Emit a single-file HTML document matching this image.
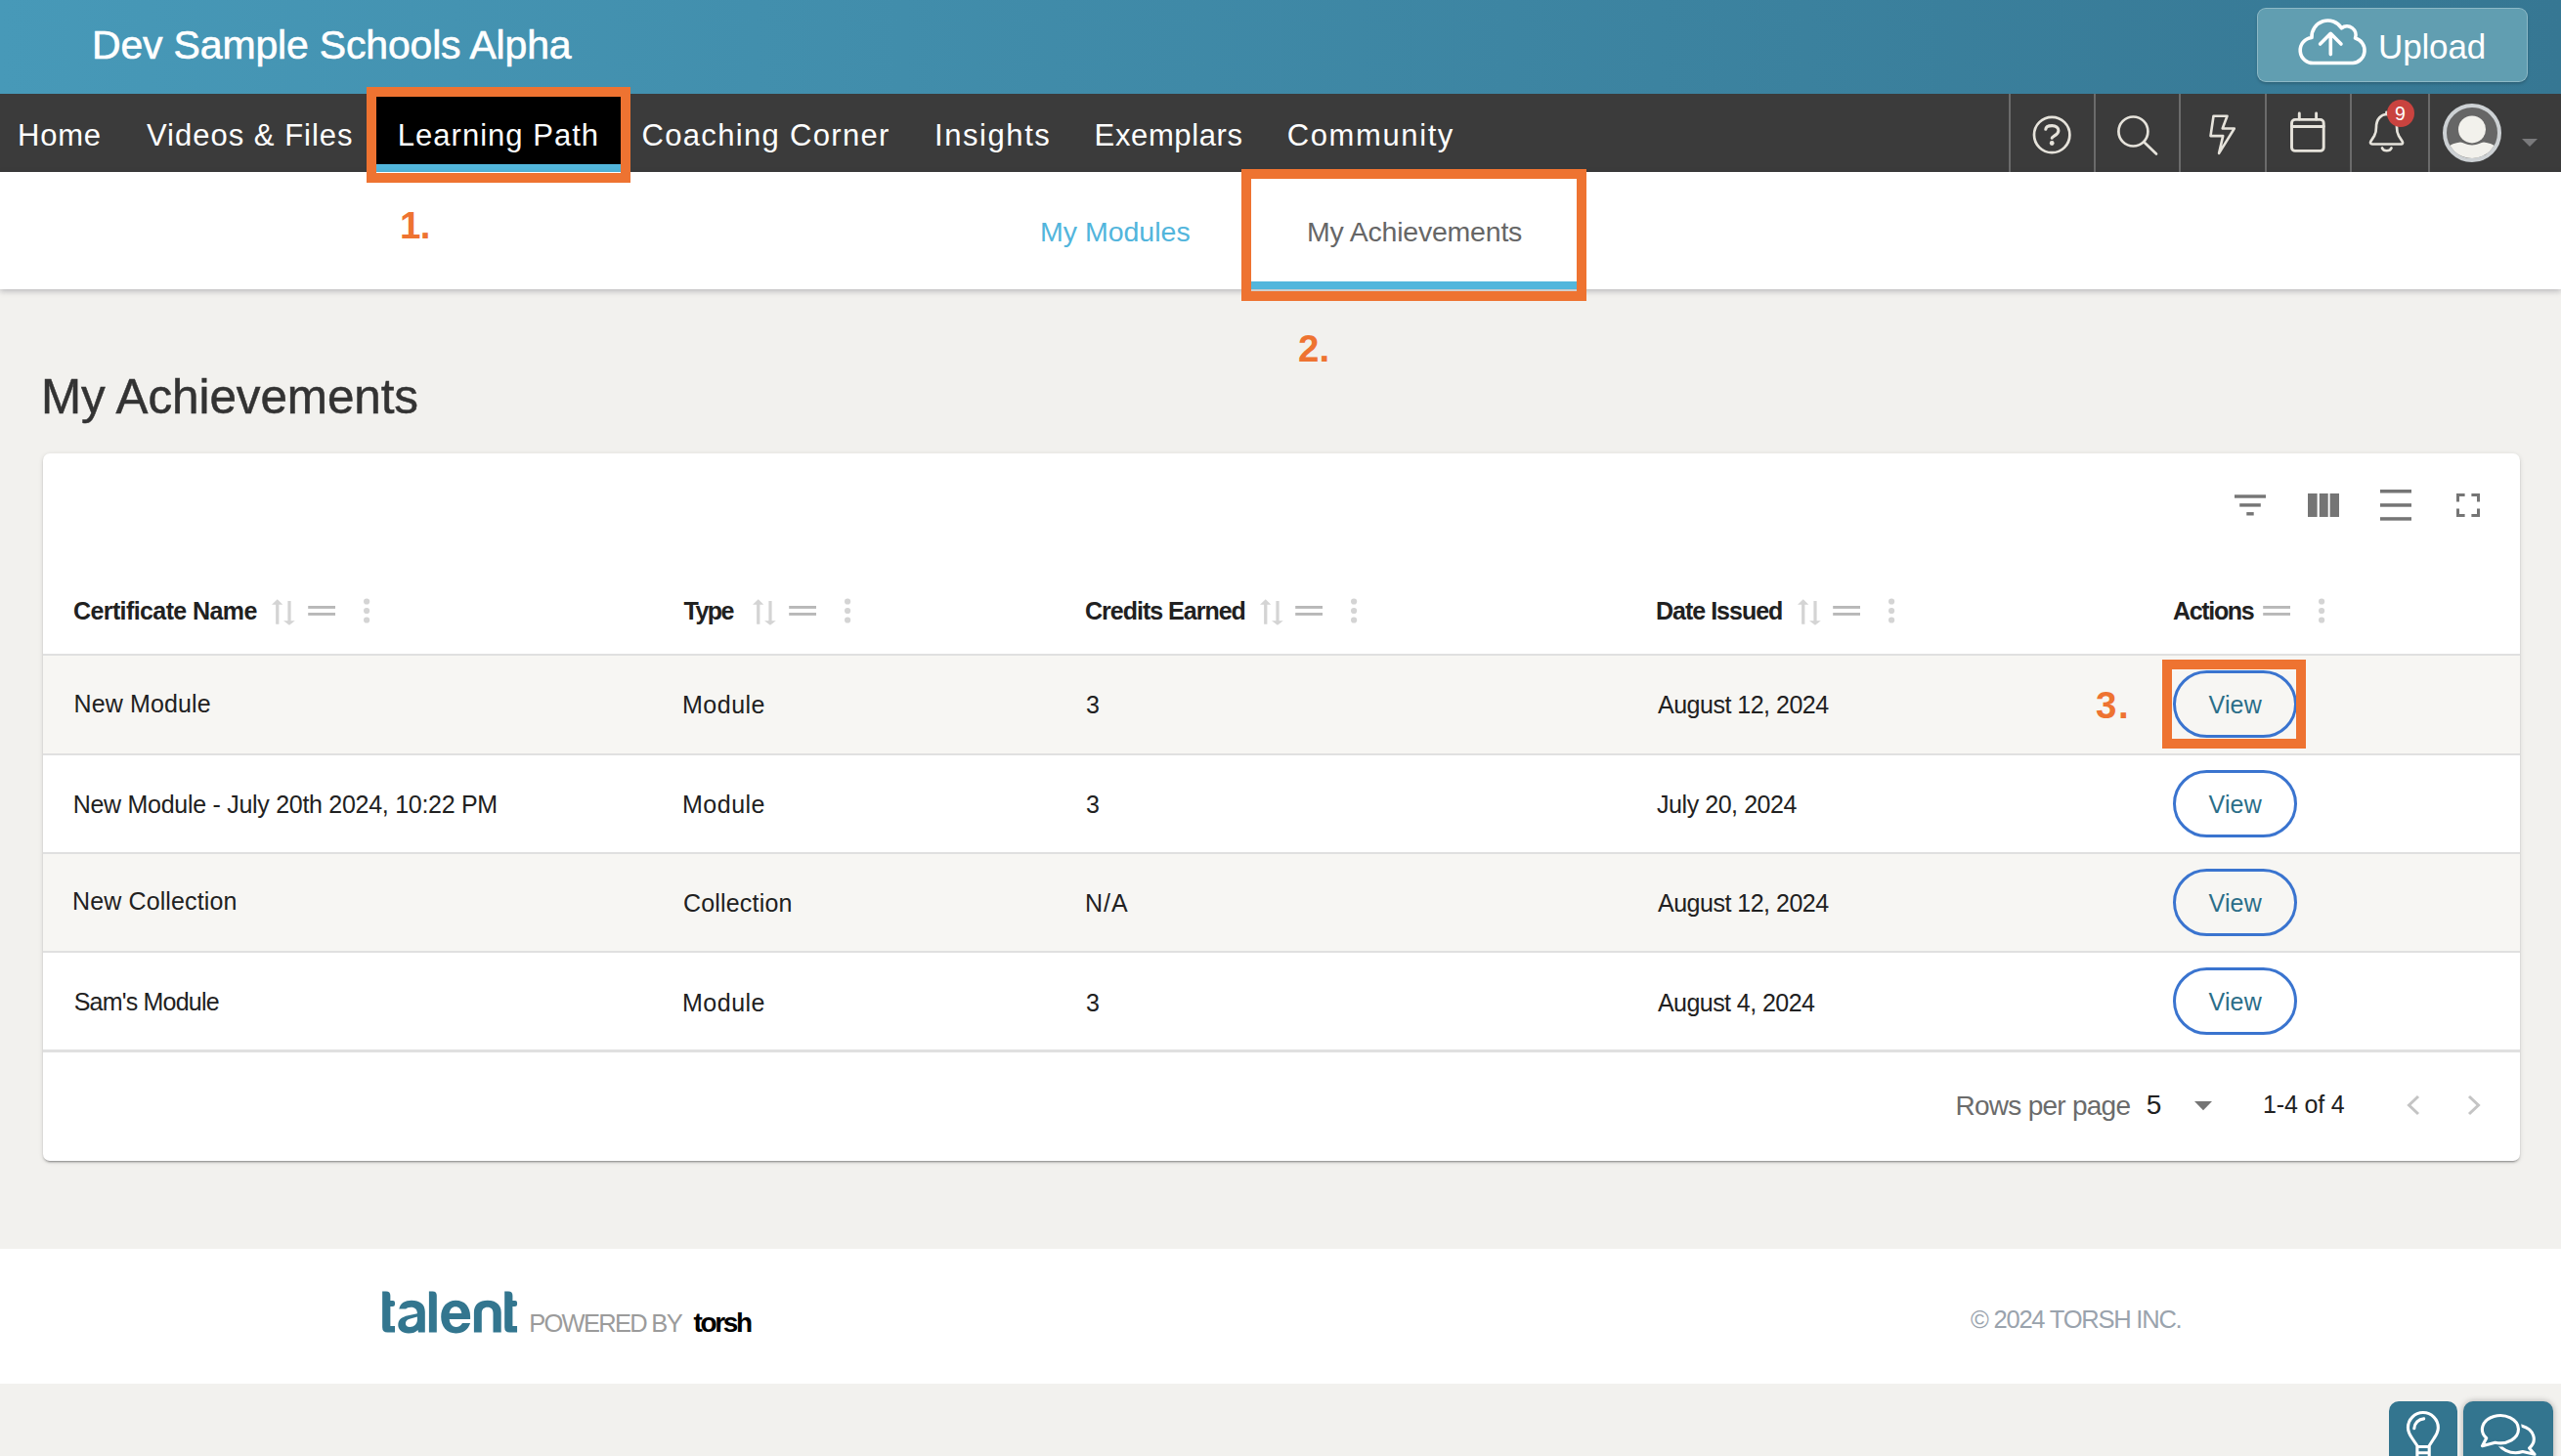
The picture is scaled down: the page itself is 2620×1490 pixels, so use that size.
<!DOCTYPE html>
<html><head><meta charset="utf-8">
<style>
*{margin:0;padding:0;box-sizing:border-box}
html,body{width:2620px;height:1490px;overflow:hidden;background:#f2f1ee;font-family:"Liberation Sans",sans-serif;position:relative}
.a{position:absolute}
.t{position:absolute;white-space:nowrap;line-height:1}
.div{position:absolute;top:96px;width:2px;height:80px;background:#6b6b6b}
.ob{position:absolute;border:10px solid #ee7331}
.rb{position:absolute;left:44px;width:2534px;height:2px;background:#e0e0e0}
.vb{position:absolute;left:2223px;width:127px;height:69px;border:3.8px solid #3a74cf;border-radius:35px}
</style></head><body>
<div class="a" style="left:0;top:0;width:2620px;height:96px;background:linear-gradient(to right,#4799b8,#367793)"></div>
<div class="t" style="left:94.0px;top:26.29px;font-size:41px;letter-spacing:-0.174px;color:#fff;-webkit-text-stroke:0.6px #fff">Dev Sample Schools Alpha</div>
<div class="a" style="left:2309px;top:8px;width:277px;height:76px;border-radius:9px;background:#619eb1;border:1.5px solid rgba(255,255,255,.28);box-shadow:0 2px 3px rgba(0,0,0,.18)"></div>
<svg class="a" style="left:2340px;top:10px" width="100" height="70" viewBox="2340 10 100 70">
 <g fill="none" stroke="#fff" stroke-width="3.6" stroke-linecap="round" stroke-linejoin="round">
  <path d="M2367.5 64.5 H2407 A13 13 0 0 0 2409.5 39 A9 9 0 0 0 2395.5 28.8 A16.5 16.5 0 0 0 2365 38.5 A13 13 0 0 0 2367.5 64.5 Z"/>
  <path d="M2384.3 55.6 V34.5 M2373.6 45 L2384.3 34.3 L2395 45"/>
 </g>
</svg>
<div class="t" style="left:2433.0px;top:30.07px;font-size:35px;letter-spacing:-0.14px;color:#fff">Upload</div>
<div class="a" style="left:0;top:96px;width:2620px;height:80px;background:#3b3b3b"></div>
<div class="a" style="left:380px;top:96px;width:260px;height:80px;background:#000"></div>
<div class="a" style="left:380px;top:168px;width:260px;height:8px;background:#52b6dc"></div>
<div class="t" style="left:18.0px;top:122.96px;font-size:31px;letter-spacing:0.8px;color:#fff">Home</div>
<div class="t" style="left:150.0px;top:122.96px;font-size:31px;letter-spacing:1.0px;color:#fff">Videos &amp; Files</div>
<div class="t" style="left:406.8px;top:122.96px;font-size:31px;letter-spacing:1.017px;color:#fff">Learning Path</div>
<div class="t" style="left:656.5px;top:122.96px;font-size:31px;letter-spacing:1.321px;color:#fff">Coaching Corner</div>
<div class="t" style="left:956.0px;top:122.96px;font-size:31px;letter-spacing:1.571px;color:#fff">Insights</div>
<div class="t" style="left:1119.6px;top:122.96px;font-size:31px;letter-spacing:0.625px;color:#fff">Exemplars</div>
<div class="t" style="left:1316.8px;top:122.96px;font-size:31px;letter-spacing:1.6px;color:#fff">Community</div>
<div class="div" style="left:2055px"></div>
<div class="div" style="left:2142px"></div>
<div class="div" style="left:2229px"></div>
<div class="div" style="left:2317px"></div>
<div class="div" style="left:2404px"></div>
<div class="div" style="left:2484px"></div>
<svg class="a" style="left:2056px;top:96px" width="564" height="80" viewBox="2056 96 564 80">
 <g fill="none" stroke="#e6e3db" stroke-width="2.7" stroke-linecap="round" stroke-linejoin="round">
  <circle cx="2099.2" cy="138" r="18.2"/>
  <path d="M2092.8 132.3 C2093 129.7 2095.8 128.6 2099.3 128.6 C2103.2 128.6 2105.9 130.6 2105.9 133.8 C2105.9 136.8 2103.5 138 2101.2 139.3 C2099.7 140.2 2099.2 140.8 2099.2 141.3" stroke-width="3.1"/>
  <circle cx="2099.2" cy="146.5" r="2.4" fill="#e6e3db" stroke="none"/>
  <circle cx="2182.4" cy="134.5" r="15"/>
  <path d="M2193.5 145.5 L2206 157.5"/>
  <path d="M2264.5 118.8 L2278.5 118.8 L2273.7 131.5 L2285.8 131.5 L2270.1 156.9 L2274.2 139.1 L2261.5 139.1 Z" stroke-width="2.6"/>
  <rect x="2344.5" y="122.4" width="32.7" height="32" rx="3.5" stroke-width="2.9"/>
  <path d="M2344.5 129.5 H2377.2 M2352.3 116 V122 M2369.6 116 V122" stroke-width="2.9"/>
  <path d="M2427 147.5 H2457 C2458 147.5 2458.5 146 2457.5 144.5 L2454 139 C2452.5 136.5 2452 134 2452 130 C2452 122 2447 117 2441.5 117 C2436 117 2431 122 2431 130 C2431 134 2430.5 136.5 2429 139 L2425.5 144.5 C2424.5 146 2425 147.5 2427 147.5 Z" stroke-width="2.7"/>
  <path d="M2437 151.5 A5 4 0 0 0 2446.5 151.5" stroke-width="2.7"/>
  <path d="M2441.5 114.8 V117" stroke-width="2.7"/>
 </g>
 <circle cx="2456" cy="116" r="14" fill="#c9433f"/>
 <text x="2455.5" y="123" fill="#fff" font-size="19.5" font-family="Liberation Sans" text-anchor="middle">9</text>
 <circle cx="2529" cy="136" r="28" fill="#666" stroke="#cdd1d4" stroke-width="4"/>
 <clipPath id="avc"><circle cx="2529" cy="136" r="26"/></clipPath>
 <g clip-path="url(#avc)" fill="#f2f1ec">
  <circle cx="2529" cy="132.4" r="14"/>
  <path d="M2529 148.5 C2535 148.5 2538 145.5 2541 145.5 C2552 147 2560 152 2565 170 H2493 C2498 152 2506 147 2517 145.5 C2520 145.5 2523 148.5 2529 148.5 Z"/>
 </g>
 <path d="M2580 142 H2596 L2588 150 Z" fill="#7a7a7c"/>
</svg>
<div class="a" style="left:0;top:176px;width:2620px;height:120px;background:#fff;box-shadow:0 2px 6px rgba(20,20,40,.26)"></div>
<div class="t" style="left:1064.0px;top:222.87px;font-size:28.5px;letter-spacing:0.0px;color:#52b5dc">My Modules</div>
<div class="t" style="left:1337.0px;top:222.87px;font-size:28.5px;letter-spacing:-0.214px;color:#666">My Achievements</div>
<div class="a" style="left:1280px;top:288px;width:333px;height:8px;background:#52b6dc"></div>
<div class="ob" style="left:375px;top:89px;width:270px;height:98px"></div>
<div class="ob" style="left:1270px;top:173px;width:353px;height:135px"></div>
<div class="t" style="left:409.0px;top:212.31px;font-size:38.5px;font-weight:700;letter-spacing:-0.6px;color:#ee7331">1.</div>
<div class="t" style="left:1328.0px;top:337.91px;font-size:38.5px;font-weight:700;letter-spacing:0.0px;color:#ee7331">2.</div>
<div class="t" style="left:42.0px;top:381.18px;font-size:49.4px;letter-spacing:-0.071px;color:#333;-webkit-text-stroke:0.5px #333">My Achievements</div>
<div class="a" style="left:44px;top:464px;width:2534px;height:724px;background:#fff;border-radius:7px;box-shadow:0 3px 1px -2px rgba(0,0,0,.2),0 2px 2px 0 rgba(0,0,0,.14),0 1px 5px 0 rgba(0,0,0,.12)"></div>
<svg class="a" style="left:2280px;top:495px" width="270" height="45" viewBox="2280 495 270 45">
 <g fill="#757575">
  <rect x="2286" y="506.3" width="32" height="3.4"/>
  <rect x="2291.2" y="515.2" width="21.6" height="3.4"/>
  <rect x="2298.3" y="524.1" width="7.4" height="3.4"/>
  <rect x="2361" y="505" width="9.6" height="24"/>
  <rect x="2372.8" y="505" width="8.9" height="24"/>
  <rect x="2383.6" y="505" width="9.4" height="24"/>
  <rect x="2435" y="501" width="32" height="3.5"/>
  <rect x="2435" y="515.2" width="32" height="3.5"/>
  <rect x="2435" y="529.2" width="32" height="3.5"/>
  <path d="M2513 505 h8.6 v3 h-5.6 v5.6 h-3 Z M2537 505 v8.6 h-3 v-5.6 h-5.6 v-3 Z M2513 529 v-8.6 h3 v5.6 h5.6 v3 Z M2537 529 h-8.6 v-3 h5.6 v-5.6 h3 Z"/>
 </g>
</svg>
<div class="t" style="left:75.0px;top:612.84px;font-size:25px;font-weight:700;letter-spacing:-0.6px;color:#212121">Certificate Name</div>
<div class="t" style="left:699.6px;top:612.84px;font-size:25px;font-weight:700;letter-spacing:-1.533px;color:#212121">Type</div>
<div class="t" style="left:1110.0px;top:612.84px;font-size:25px;font-weight:700;letter-spacing:-1.0px;color:#212121">Credits Earned</div>
<div class="t" style="left:1694.0px;top:612.84px;font-size:25px;font-weight:700;letter-spacing:-1.0px;color:#212121">Date Issued</div>
<div class="t" style="left:2223.0px;top:612.84px;font-size:25px;font-weight:700;letter-spacing:-1.333px;color:#212121">Actions</div>
<svg class="a" style="left:0;top:600px" width="2620" height="50" viewBox="0 600 2620 50">
 <defs>
  <g id="srt" fill="#d4d4d4">
   <path d="M278 618.8 L283.75 613.3 L289.3 618.8 H285.4 V638.7 H282.1 V618.8 Z"/>
   <path d="M294.4 615 H297.6 V635.2 H301.8 L296 639.8 L290 635.2 H294.4 Z"/>
  </g>
  <g id="drg" fill="#b8b8b8">
   <rect x="315.2" y="620" width="27.8" height="2.9"/>
   <rect x="315.2" y="627" width="27.8" height="2.9"/>
  </g>
  <g id="dts" fill="#d4d4d4">
   <circle cx="375.1" cy="615.5" r="3.1"/>
   <circle cx="375.1" cy="625" r="3.1"/>
   <circle cx="375.1" cy="634.5" r="3.1"/>
  </g>
 </defs>
 <use href="#srt"/><use href="#drg"/><use href="#dts"/>
 <use href="#srt" x="492"/><use href="#drg" x="492"/><use href="#dts" x="492"/>
 <use href="#srt" x="1011"/><use href="#drg" x="1010"/><use href="#dts" x="1010"/>
 <use href="#srt" x="1561"/><use href="#drg" x="1560"/><use href="#dts" x="1560"/>
 <use href="#drg" x="2000"/><use href="#dts" x="2000"/>
</svg>
<div class="rb" style="top:669px"></div>
<div class="a" style="left:44px;top:671px;width:2534px;height:100px;background:#f7f6f3"></div>
<div class="rb" style="top:771px"></div>
<div class="rb" style="top:872px"></div>
<div class="a" style="left:44px;top:874px;width:2534px;height:99px;background:#f7f6f3"></div>
<div class="rb" style="top:973px"></div>
<div class="rb" style="top:1074px;height:3px"></div>
<div class="t" style="left:75.6px;top:707.84px;font-size:25px;letter-spacing:0.111px;color:#212121">New Module</div>
<div class="t" style="left:698.0px;top:709.34px;font-size:25px;letter-spacing:0.5px;color:#212121">Module</div>
<div class="t" style="left:1111.0px;top:709.34px;font-size:25px;letter-spacing:0.0px;color:#212121">3</div>
<div class="t" style="left:1696.0px;top:709.34px;font-size:25px;letter-spacing:-0.5px;color:#212121">August 12, 2024</div>
<div class="t" style="left:74.7px;top:810.84px;font-size:25px;letter-spacing:-0.283px;color:#212121">New Module - July 20th 2024, 10:22 PM</div>
<div class="t" style="left:698.0px;top:811.04px;font-size:25px;letter-spacing:0.5px;color:#212121">Module</div>
<div class="t" style="left:1111.0px;top:811.04px;font-size:25px;letter-spacing:0.0px;color:#212121">3</div>
<div class="t" style="left:1695.0px;top:811.04px;font-size:25px;letter-spacing:-0.442px;color:#212121">July 20, 2024</div>
<div class="t" style="left:74.0px;top:910.44px;font-size:25px;letter-spacing:0.123px;color:#212121">New Collection</div>
<div class="t" style="left:699.0px;top:912.04px;font-size:25px;letter-spacing:0.178px;color:#212121">Collection</div>
<div class="t" style="left:1110.0px;top:912.04px;font-size:25px;letter-spacing:1.0px;color:#212121">N/A</div>
<div class="t" style="left:1696.0px;top:912.04px;font-size:25px;letter-spacing:-0.5px;color:#212121">August 12, 2024</div>
<div class="t" style="left:75.7px;top:1013.04px;font-size:25px;letter-spacing:-0.791px;color:#212121">Sam's Module</div>
<div class="t" style="left:698.0px;top:1013.54px;font-size:25px;letter-spacing:0.5px;color:#212121">Module</div>
<div class="t" style="left:1111.0px;top:1013.54px;font-size:25px;letter-spacing:0.0px;color:#212121">3</div>
<div class="t" style="left:1696.0px;top:1013.54px;font-size:25px;letter-spacing:-0.562px;color:#212121">August 4, 2024</div>
<div class="vb" style="top:686px"></div>
<div class="vb" style="top:788px"></div>
<div class="vb" style="top:889px"></div>
<div class="vb" style="top:990px"></div>
<div class="t" style="left:2259.5px;top:708.84px;font-size:25px;letter-spacing:0.167px;color:#2b6e89">View</div>
<div class="t" style="left:2259.5px;top:810.84px;font-size:25px;letter-spacing:0.167px;color:#2b6e89">View</div>
<div class="t" style="left:2259.5px;top:911.84px;font-size:25px;letter-spacing:0.167px;color:#2b6e89">View</div>
<div class="t" style="left:2259.5px;top:1013.34px;font-size:25px;letter-spacing:0.167px;color:#2b6e89">View</div>
<div class="t" style="left:2000.5px;top:1118.4px;font-size:28px;letter-spacing:-0.733px;color:#6b6b6b">Rows per page</div>
<div class="t" style="left:2195.8px;top:1116.9px;font-size:28px;letter-spacing:0.0px;color:#212121">5</div>
<div class="t" style="left:2315.0px;top:1117.84px;font-size:25px;letter-spacing:-0.143px;color:#212121">1-4 of 4</div>
<svg class="a" style="left:2240px;top:1120px" width="300" height="30" viewBox="2240 1120 300 30">
 <path d="M2245 1127 H2263 L2254 1136.2 Z" fill="#757575"/>
 <path d="M2474 1122 L2464.5 1131 L2474 1140" fill="none" stroke="#c4c4c4" stroke-width="3"/>
 <path d="M2526 1122 L2535.5 1131 L2526 1140" fill="none" stroke="#c4c4c4" stroke-width="3"/>
</svg>
<div class="ob" style="left:2212px;top:675px;width:147px;height:91px"></div>
<div class="t" style="left:2144.0px;top:703.41px;font-size:38.5px;font-weight:700;letter-spacing:1.5px;color:#ee7331">3.</div>
<div class="a" style="left:0;top:1278px;width:2620px;height:138px;background:#fff"></div>
<svg class="a" style="left:380px;top:1315px" width="160" height="55" viewBox="380 1315 160 55">
 <g fill="#33768f">
  <path id="lt" d="M391.15 1321.44 H395 Q399.35 1321.44 399.35 1325.8 V1331.1 H402 Q404 1331.1 404 1333.1 V1334.5 Q404 1337 401.5 1337 H399.35 V1356.9 H404 V1363.6 H396.5 Q391.15 1363.6 391.15 1358.3 Z"/>
  <use href="#lt" x="125.05"/>
  <path d="M438.9 1321.44 H442.5 Q446.8 1321.44 446.8 1325.8 V1363.6 H438.9 Z"/>
  <path fill-rule="evenodd" d="M408.3 1339.6 C409.5 1333.5 414.5 1330.8 421 1330.8 C429.5 1330.8 434.8 1334.8 434.8 1342.5 V1363.6 H428 L427.5 1361 C425.5 1363.5 422 1364.5 418 1364.5 C411.5 1364.5 407.3 1360.8 407.3 1356 C407.3 1350.5 411 1347.8 417.5 1346.3 L426.9 1344.2 C426.9 1340 424.5 1337.8 420.5 1337.8 C417.5 1337.8 416 1338.8 415.2 1339.6 Z M426.9 1347.5 L419 1349.8 C416 1350.8 414.9 1352.5 414.9 1354.3 C414.9 1356.5 416.5 1358 419.3 1358 C423.5 1358 426.9 1355 426.9 1350.5 Z"/>
  <path fill-rule="evenodd" d="M481.1 1350.1 H459.7 C460.2 1355.5 463 1358 466.5 1358 C469.5 1358 471.5 1356.5 473 1354 H481.1 C479 1360.5 474 1364.5 466.3 1364.5 C457 1364.5 451.2 1357.5 451.2 1347.6 C451.2 1337.5 457.5 1330.8 466.2 1330.8 C475.5 1330.8 481.1 1337.5 481.1 1347 Z M459.7 1344 H472.3 C471.8 1339.8 469.5 1337.3 466 1337.3 C462.5 1337.3 460.3 1339.8 459.7 1344 Z"/>
  <path d="M484.9 1363.6 V1343 C484.9 1335 490.5 1330.8 498.8 1330.8 C507 1330.8 512.7 1335 512.7 1343 V1363.6 H504.5 V1344 C504.5 1340 502.5 1337.8 498.7 1337.8 C495 1337.8 492.8 1340 492.8 1344 V1363.6 Z"/>
 </g>
</svg>
<div class="t" style="left:541.2px;top:1342.31px;font-size:25.5px;letter-spacing:-1.711px;color:#9b9b9b">POWERED BY</div>
<div class="t" style="left:709.6px;top:1340.2px;font-size:28px;font-weight:700;letter-spacing:-2.4px;color:#000">torsh</div>
<div class="t" style="left:2016.0px;top:1337.61px;font-size:25.5px;letter-spacing:-1.213px;color:#9aa3ad">© 2024 TORSH INC.</div>
<div class="a" style="left:2444px;top:1434px;width:70px;height:70px;border-radius:10px;background:#33758f"></div>
<div class="a" style="left:2520px;top:1434px;width:92px;height:70px;border-radius:10px;background:#33758f;box-shadow:0 0 6px rgba(0,0,0,.3)"></div>
<svg class="a" style="left:2440px;top:1430px" width="180" height="60" viewBox="2440 1430 180 60">
 <g fill="none" stroke="#fff" stroke-width="3.1" stroke-linecap="round" stroke-linejoin="round">
  <path d="M2472.9 1492 V1479.5 L2467.8 1472 C2465 1468 2463.45 1465 2463.45 1461 A15.45 15.45 0 0 1 2494.35 1461 C2494.35 1465 2492.8 1468 2490 1472 L2485.2 1479.5 V1492"/>
  <path d="M2472.9 1480.5 H2485.2 M2472.9 1486.7 H2485.2" stroke-linecap="butt"/>
  <path d="M2469.8 1461.8 A10.5 10.5 0 0 1 2479.7 1451.9"/>
  <path d="M2580.8 1485.6 L2593 1488.3 L2587.6 1481.9 A18.5 14.1 0 1 0 2580.8 1485.6 Z"/>
  <path d="M2543.7 1471.7 L2539.5 1479.7 L2552.6 1476.2 A18.5 14.1 0 1 0 2543.7 1471.7 Z" fill="#33758f" stroke="#33758f" stroke-width="7"/>
  <path d="M2543.7 1471.7 L2539.5 1479.7 L2552.6 1476.2 A18.5 14.1 0 1 0 2543.7 1471.7 Z"/>
 </g>
</svg>
</body></html>
